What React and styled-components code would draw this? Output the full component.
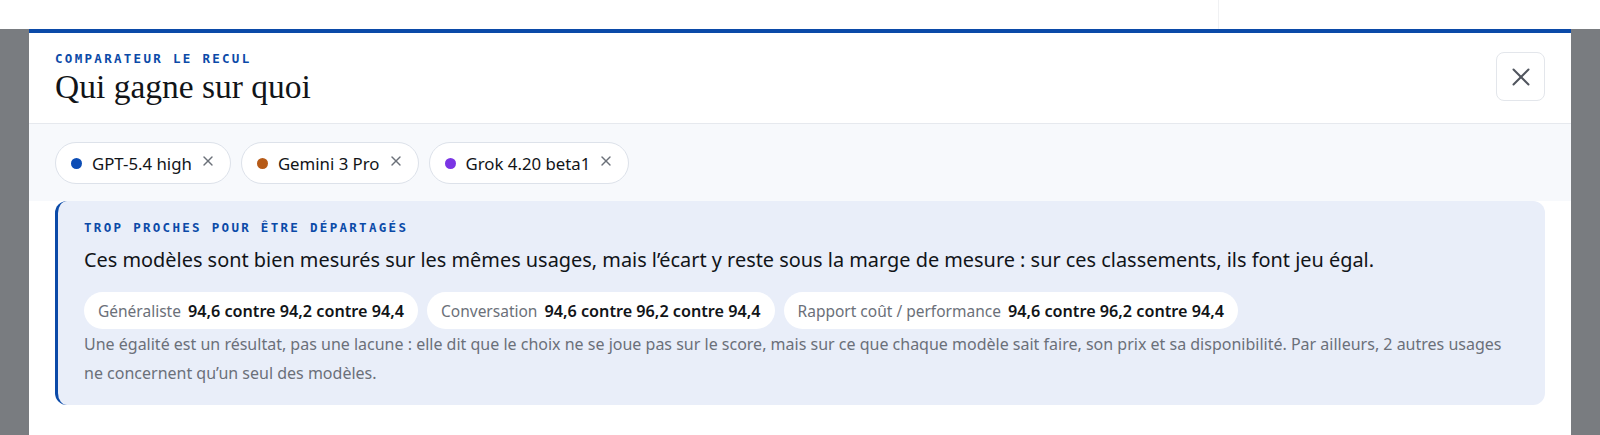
import styled, { createGlobalStyle } from "styled-components";
import { X } from "lucide-react";

const GlobalStyle = createGlobalStyle`
  * { box-sizing: border-box; }
  body {
    margin: 0;
    background: #ffffff;
    font-family: "Noto Sans", "Open Sans", sans-serif;
    color: #111418;
  }
`;

const Page = styled.div`
  width: 1600px;
  height: 435px;
  overflow: hidden;
  display: flex;
  flex-direction: column;
`;

const TopStrip = styled.div`
  height: 29px;
  flex-shrink: 0;
  display: grid;
  grid-template-columns: 1219px 1fr;
  background: #ffffff;
`;

const StripCell = styled.div`
  border-right: ${(p) => (p.$divided ? "1px solid #f0f1f3" : "none")};
`;

const Backdrop = styled.div`
  flex: 1;
  background: #797c80;
  padding: 0 29px;
  display: flex;
`;

const Modal = styled.div`
  flex: 1;
  background: #ffffff;
  border-top: 4px solid #0b4aa8;
  display: flex;
  flex-direction: column;
`;

const Header = styled.header`
  display: flex;
  justify-content: space-between;
  align-items: flex-start;
  padding: 18px 26px 0 26px;
  height: 91px;
  border-bottom: 1px solid #e6e9ee;
`;

const Eyebrow = styled.div`
  font-family: "DejaVu Sans Mono", "Liberation Mono", monospace;
  font-weight: 700;
  font-size: 12.5px;
  line-height: 16px;
  letter-spacing: 2.3px;
  color: #0b4aa8;
  text-transform: uppercase;
`;

const Title = styled.h1`
  margin: 0;
  font-family: "Liberation Serif", "Times New Roman", serif;
  font-weight: 400;
  font-size: 33.5px;
  line-height: 40px;
  color: #111418;
`;

const CloseButton = styled.button`
  width: 49px;
  height: 49px;
  margin-top: 1px;
  border: 1px solid #e3e6eb;
  border-radius: 8px;
  background: #ffffff;
  color: #50555e;
  display: flex;
  align-items: center;
  justify-content: center;
  padding: 0;
  cursor: pointer;
`;

const ChipBar = styled.div`
  background: #f7f9fc;
  display: flex;
  gap: 10px;
  padding: 18px 26px 17px 26px;
`;

const Chip = styled.div`
  height: 42px;
  display: flex;
  align-items: center;
  padding: 0 14px 0 15px;
  border: 1px solid #dde2ea;
  border-radius: 21px;
  background: #ffffff;
  font-size: 16.8px;
  color: #111418;
`;

const Dot = styled.span`
  width: 11px;
  height: 11px;
  border-radius: 50%;
  background: ${(p) => p.$color};
  margin-right: 10px;
`;

const ChipRemove = styled.span`
  display: flex;
  margin-left: 8px;
  margin-top: -5px;
  color: #6b7079;
`;

const Body = styled.div`
  padding: 0 26px;
`;

const Verdict = styled.section`
  background: #e9eef9;
  border-left: 3px solid #0b4aa8;
  border-radius: 12px;
  padding: 19px 26px 12px 26px;
  height: 204px;
`;

const Lead = styled.p`
  margin: 10px 0 0 0;
  font-size: 19.9px;
  line-height: 28px;
  color: #111418;
`;

const Pills = styled.div`
  display: flex;
  gap: 9px;
  margin-top: 18px;
`;

const Pill = styled.div`
  height: 37px;
  display: flex;
  align-items: center;
  gap: 7px;
  padding: 0 14px;
  border-radius: 19px;
  background: #ffffff;
  font-size: 15.5px;
`;

const PillLabel = styled.span`
  color: #6b7079;
`;

const PillValue = styled.span`
  color: #111418;
  font-size: 16.2px;
  font-weight: 600;
`;

const Note = styled.p`
  margin: 1px 0 0 0;
  font-size: 16px;
  line-height: 28.5px;
  color: #6b7079;
`;

const models = [
  { name: "GPT-5.4 high", color: "#0c4db5" },
  { name: "Gemini 3 Pro", color: "#b65a17" },
  { name: "Grok 4.20 beta1", color: "#7a35e4" },
];

const usages = [
  { label: "Généraliste", value: "94,6 contre 94,2 contre 94,4" },
  { label: "Conversation", value: "94,6 contre 96,2 contre 94,4" },
  { label: "Rapport coût / performance", value: "94,6 contre 96,2 contre 94,4" },
];

export default function App() {
  return (
    <Page>
      <GlobalStyle />
      <TopStrip>
        <StripCell $divided />
        <StripCell />
      </TopStrip>
      <Backdrop>
        <Modal>
          <Header>
            <div>
              <Eyebrow>Comparateur Le Recul</Eyebrow>
              <Title>Qui gagne sur quoi</Title>
            </div>
            <CloseButton aria-label="Fermer">
              <X size={30} strokeWidth={1.6} />
            </CloseButton>
          </Header>
          <ChipBar>
            {models.map((m) => (
              <Chip key={m.name}>
                <Dot $color={m.color} />
                {m.name}
                <ChipRemove>
                  <X size={16} strokeWidth={2} />
                </ChipRemove>
              </Chip>
            ))}
          </ChipBar>
          <Body>
            <Verdict>
              <Eyebrow>Trop proches pour être départagés</Eyebrow>
              <Lead>
                Ces modèles sont bien mesurés sur les mêmes usages, mais l’écart y reste sous la
                marge de mesure : sur ces classements, ils font jeu égal.
              </Lead>
              <Pills>
                {usages.map((u) => (
                  <Pill key={u.label}>
                    <PillLabel>{u.label}</PillLabel>
                    <PillValue>{u.value}</PillValue>
                  </Pill>
                ))}
              </Pills>
              <Note>
                Une égalité est un résultat, pas une lacune : elle dit que le choix ne se joue pas
                sur le score, mais sur ce que chaque modèle sait faire, son prix et sa
                disponibilité. Par ailleurs, 2 autres usages ne concernent qu’un seul des modèles.
              </Note>
            </Verdict>
          </Body>
        </Modal>
      </Backdrop>
    </Page>
  );
}
